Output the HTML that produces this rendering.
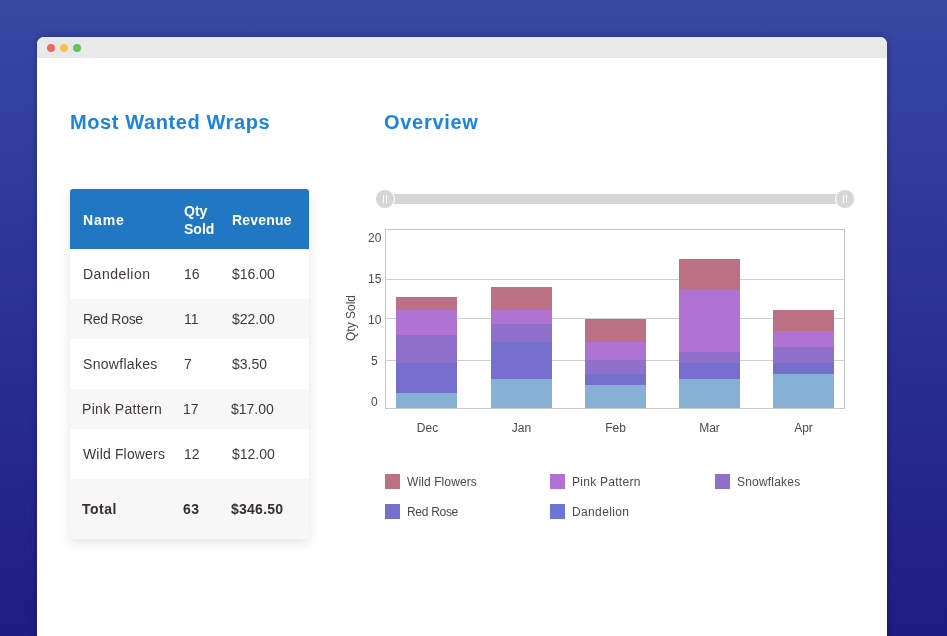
<!DOCTYPE html>
<html>
<head>
<meta charset="utf-8">
<style>
html,body{margin:0;padding:0;}
body{width:947px;height:636px;overflow:hidden;position:relative;
  background:linear-gradient(180deg,#3748a3 0%,#2b3194 50%,#1f1c82 100%);
  font-family:"Liberation Sans",sans-serif;}
.abs{position:absolute;}
#win{left:37px;top:37px;width:850px;height:620px;background:#fff;border-radius:7px 7px 0 0;
  box-shadow:0 0 6px rgba(10,10,60,0.35);overflow:hidden;}
#bar{left:0;top:0;width:850px;height:21px;background:#e8e8e8;}
.dot{width:8px;height:8px;border-radius:50%;top:7px;}
h2{margin:0;font-size:20px;font-weight:bold;color:#1b84e0;position:absolute;white-space:nowrap;line-height:24px;}
#tbl{left:70px;top:189px;width:239px;height:350px;border-radius:3px 3px 0 0;
  box-shadow:0 4px 12px rgba(0,0,0,0.10);background:#fff;}
.row{position:absolute;left:0;width:239px;}
.cell{position:absolute;white-space:nowrap;font-size:14px;color:#3f3a36;line-height:16px;}
.hd .cell{color:#fff;font-weight:bold;}
.tot .cell{font-weight:bold;color:#36302c;letter-spacing:0.5px;}
.seg{position:absolute;}
.lbl{position:absolute;font-size:12px;color:#4a4a4a;white-space:nowrap;line-height:14px;}
.grid{position:absolute;height:1px;background:#cfcfcf;}
.sw{position:absolute;width:15px;height:15px;}
</style>
</head>
<body>
<div id="root" style="position:absolute;left:0;top:0;width:947px;height:636px;will-change:transform">
<div id="win" class="abs">
  <div id="bar" class="abs"></div>
  <div class="abs dot" style="left:10px;background:#ee6a5f"></div>
  <div class="abs dot" style="left:23px;background:#f5c04f"></div>
  <div class="abs dot" style="left:36px;background:#5fc454"></div>
</div>

<h2 style="left:70px;top:110px;letter-spacing:0.6px">Most Wanted Wraps</h2>
<h2 style="left:384px;top:110px;letter-spacing:0.7px">Overview</h2>

<!-- table -->
<div id="tbl" class="abs">
  <div class="row hd" style="top:0;height:60px;background:#1f78c1;border-radius:3px 3px 0 0;">
    <div class="cell" style="left:13px;top:23px;letter-spacing:0.9px">Name</div>
    <div class="cell" style="left:114px;top:13px;line-height:18px">Qty<br>Sold</div>
    <div class="cell" style="left:162px;top:23px;letter-spacing:0.2px">Revenue</div>
  </div>
  <div class="row" style="top:60px;height:50px;background:#fff">
    <div class="cell" style="left:13px;top:17px;letter-spacing:0.5px">Dandelion</div>
    <div class="cell" style="left:114px;top:17px">16</div>
    <div class="cell" style="left:162px;top:17px">$16.00</div>
  </div>
  <div class="row" style="top:110px;height:40px;background:#f7f7f7">
    <div class="cell" style="left:13px;top:12px;letter-spacing:-0.3px">Red Rose</div>
    <div class="cell" style="left:114px;top:12px">11</div>
    <div class="cell" style="left:162px;top:12px">$22.00</div>
  </div>
  <div class="row" style="top:150px;height:50px;background:#fff">
    <div class="cell" style="left:13px;top:17px;letter-spacing:0.3px">Snowflakes</div>
    <div class="cell" style="left:114px;top:17px">7</div>
    <div class="cell" style="left:162px;top:17px">$3.50</div>
  </div>
  <div class="row" style="top:200px;height:40px;background:#f7f7f7">
    <div class="cell" style="left:12px;top:12px;letter-spacing:0.33px">Pink Pattern</div>
    <div class="cell" style="left:113px;top:12px">17</div>
    <div class="cell" style="left:161px;top:12px">$17.00</div>
  </div>
  <div class="row" style="top:240px;height:50px;background:#fff">
    <div class="cell" style="left:13px;top:17px;letter-spacing:0.16px">Wild Flowers</div>
    <div class="cell" style="left:114px;top:17px">12</div>
    <div class="cell" style="left:162px;top:17px">$12.00</div>
  </div>
  <div class="row tot" style="top:290px;height:60px;background:#f7f7f7">
    <div class="cell" style="left:12px;top:22px">Total</div>
    <div class="cell" style="left:113px;top:22px">63</div>
    <div class="cell" style="left:161px;top:22px;letter-spacing:0.25px">$346.50</div>
  </div>
</div>

<!-- slider -->
<div class="abs" style="left:394px;top:194px;width:442px;height:10px;background:#d6d6d6"></div>
<div class="abs" style="left:375px;top:189px;width:18px;height:18px;border-radius:50%;background:#d6d6d6;border:1px solid #fff"></div>
<div class="abs" style="left:383px;top:195px;width:1px;height:8px;background:#fff"></div>
<div class="abs" style="left:386px;top:195px;width:1px;height:8px;background:#fff"></div>
<div class="abs" style="left:835px;top:189px;width:18px;height:18px;border-radius:50%;background:#d6d6d6;border:1px solid #fff"></div>
<div class="abs" style="left:843px;top:195px;width:1px;height:8px;background:#fff"></div>
<div class="abs" style="left:846px;top:195px;width:1px;height:8px;background:#fff"></div>

<!-- chart -->
<div class="abs" style="left:385px;top:229px;width:458px;height:178px;border:1px solid #c8c8c8"></div>
<div class="grid" style="left:386px;top:279px;width:458px"></div>
<div class="grid" style="left:386px;top:318px;width:458px"></div>
<div class="grid" style="left:386px;top:360px;width:458px"></div>

<div class="lbl" style="left:368px;top:231px">20</div>
<div class="lbl" style="left:368px;top:272px">15</div>
<div class="lbl" style="left:368px;top:313px">10</div>
<div class="lbl" style="left:371px;top:354px">5</div>
<div class="lbl" style="left:371px;top:395px">0</div>

<div class="lbl" style="left:328px;top:311px;width:46px;text-align:center;transform:rotate(-90deg)">Qty Sold</div>

<!-- bars: Dec -->
<div class="seg" style="left:396px;width:61px;top:297px;height:13px;background:#bc7084"></div>
<div class="seg" style="left:396px;width:61px;top:310px;height:25px;background:#b073d1"></div>
<div class="seg" style="left:396px;width:61px;top:335px;height:28px;background:#8f71cb"></div>
<div class="seg" style="left:396px;width:61px;top:363px;height:30px;background:#7570cd"></div>
<div class="seg" style="left:396px;width:61px;top:393px;height:15px;background:#86b1d5"></div>
<!-- Jan -->
<div class="seg" style="left:491px;width:61px;top:287px;height:23px;background:#bc7084"></div>
<div class="seg" style="left:491px;width:61px;top:310px;height:14px;background:#b073d1"></div>
<div class="seg" style="left:491px;width:61px;top:324px;height:18px;background:#8f71cb"></div>
<div class="seg" style="left:491px;width:61px;top:342px;height:37px;background:#7570cd"></div>
<div class="seg" style="left:491px;width:61px;top:379px;height:29px;background:#86b1d5"></div>
<!-- Feb -->
<div class="seg" style="left:585px;width:61px;top:319px;height:23px;background:#bc7084"></div>
<div class="seg" style="left:585px;width:61px;top:342px;height:18px;background:#b073d1"></div>
<div class="seg" style="left:585px;width:61px;top:360px;height:14px;background:#8f71cb"></div>
<div class="seg" style="left:585px;width:61px;top:374px;height:11px;background:#7570cd"></div>
<div class="seg" style="left:585px;width:61px;top:385px;height:23px;background:#86b1d5"></div>
<!-- Mar -->
<div class="seg" style="left:679px;width:61px;top:259px;height:31px;background:#bc7084"></div>
<div class="seg" style="left:679px;width:61px;top:290px;height:62px;background:#b073d1"></div>
<div class="seg" style="left:679px;width:61px;top:352px;height:11px;background:#8f71cb"></div>
<div class="seg" style="left:679px;width:61px;top:363px;height:16px;background:#7570cd"></div>
<div class="seg" style="left:679px;width:61px;top:379px;height:29px;background:#86b1d5"></div>
<!-- Apr -->
<div class="seg" style="left:773px;width:61px;top:310px;height:21px;background:#bc7084"></div>
<div class="seg" style="left:773px;width:61px;top:331px;height:16px;background:#b073d1"></div>
<div class="seg" style="left:773px;width:61px;top:347px;height:16px;background:#8f71cb"></div>
<div class="seg" style="left:773px;width:61px;top:363px;height:11px;background:#7570cd"></div>
<div class="seg" style="left:773px;width:61px;top:374px;height:34px;background:#86b1d5"></div>

<div class="lbl" style="left:397px;width:61px;top:421px;text-align:center">Dec</div>
<div class="lbl" style="left:491px;width:61px;top:421px;text-align:center">Jan</div>
<div class="lbl" style="left:585px;width:61px;top:421px;text-align:center">Feb</div>
<div class="lbl" style="left:679px;width:61px;top:421px;text-align:center">Mar</div>
<div class="lbl" style="left:773px;width:61px;top:421px;text-align:center">Apr</div>

<!-- legend -->
<div class="sw" style="left:385px;top:474px;background:#bc7084"></div>
<div class="lbl" style="left:407px;top:475px;letter-spacing:0.1px">Wild Flowers</div>
<div class="sw" style="left:550px;top:474px;background:#b073d1"></div>
<div class="lbl" style="left:572px;top:475px;letter-spacing:0.27px">Pink Pattern</div>
<div class="sw" style="left:715px;top:474px;background:#8f71cb"></div>
<div class="lbl" style="left:737px;top:475px;letter-spacing:0.2px">Snowflakes</div>
<div class="sw" style="left:385px;top:504px;background:#7570cd"></div>
<div class="lbl" style="left:407px;top:505px;letter-spacing:-0.3px">Red Rose</div>
<div class="sw" style="left:550px;top:504px;background:#6a75d5"></div>
<div class="lbl" style="left:572px;top:505px;letter-spacing:0.37px">Dandelion</div>

</div>
</body>
</html>
